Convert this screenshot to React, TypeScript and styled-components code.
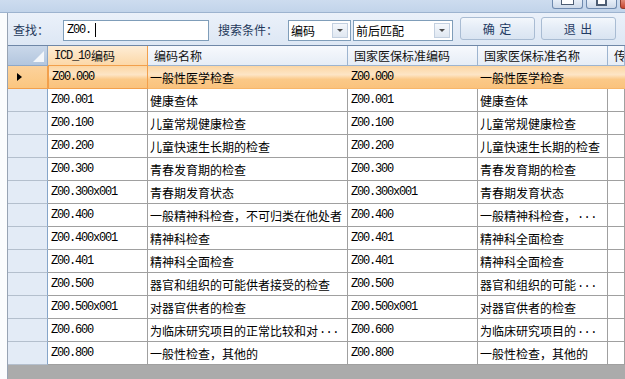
import React from 'react'
import styled, { createGlobalStyle } from 'styled-components'

const cjk = `"Noto Sans CJK SC", "Noto Sans", sans-serif`
const mono = `"Liberation Mono", "Noto Sans CJK SC", monospace`

const GlobalStyle = createGlobalStyle`
  html, body {
    margin: 0;
    padding: 0;
    width: 625px;
    height: 379px;
    overflow: hidden;
    background: #ffffff;
    font-family: ${cjk};
  }
  * { box-sizing: border-box; }
`

const Frame = styled.div`
  display: flex;
  flex-direction: column;
  width: 625px;
  height: 379px;
  overflow: hidden;
`

const TitleBar = styled.div`
  height: 13px;
  flex: none;
  display: flex;
  justify-content: flex-end;
  align-items: flex-start;
  gap: 3px;
  background: linear-gradient(180deg, #cddcef 0%, #c2d4ea 100%);
  border-bottom: 1px solid #9db3cf;
  overflow: hidden;
`

const WinButton = styled.div<{ $close?: boolean }>`
  width: ${({ $close }) => ($close ? '42px' : '31px')};
  margin-right: ${({ $close }) => ($close ? '-37px' : '0')};
  height: 9px;
  display: flex;
  justify-content: center;
  align-items: flex-start;
  border: 1px solid ${({ $close }) => ($close ? '#8e3a2c' : '#6f8aae')};
  border-top: none;
  border-radius: 0 0 3px 3px;
  background: ${({ $close }) =>
    $close
      ? 'linear-gradient(180deg, #e08a78 0%, #c8442f 100%)'
      : 'linear-gradient(180deg, #e8eff8 0%, #cdd9e9 100%)'};
`

const MinGlyph = styled.div`
  width: 13px;
  height: 5px;
  background: #ffffff;
  border: 1px solid #4d5d73;
  border-top: none;
`

const RestoreGlyph = styled.div`
  width: 11px;
  height: 6px;
  background: #ffffff;
  border: 2px solid #4d5d73;
  border-top: none;
`

const Body = styled.div`
  flex: 1;
  display: flex;
  min-height: 0;
`

const LeftStrip = styled.div`
  width: 8px;
  flex: none;
  background: #fbfcfd;
  border-right: 1px solid #97a3b3;
`

const Main = styled.div`
  flex: 1;
  display: flex;
  flex-direction: column;
  min-width: 0;
`

const Toolbar = styled.div`
  height: 33px;
  flex: none;
  display: flex;
  align-items: center;
  padding: 0 0 0 5px;
  background: linear-gradient(180deg, #ebf1fa 0%, #dde7f4 100%);
  border-bottom: 1px solid #6f87a7;
`

const Label = styled.span<{ $ml?: number }>`
  font-family: ${cjk};
  font-size: 12px;
  color: #1e395b;
  margin-left: ${({ $ml }) => $ml ?? 0}px;
  white-space: nowrap;
`

const SearchInput = styled.div`
  width: 146px;
  height: 21px;
  margin-left: 14px;
  margin-top: 2px;
  display: flex;
  align-items: center;
  padding-left: 3px;
  background: #ffffff;
  border: 1px solid #7f9db9;
  font-family: ${mono};
  font-size: 12px;
  letter-spacing: -1.2px;
  color: #000;
`

const Caret = styled.span`
  display: inline-block;
  width: 1px;
  height: 14px;
  margin-left: 4px;
  background: #000;
`

const Select = styled.div<{ $w: number; $ml: number }>`
  width: ${({ $w }) => $w}px;
  height: 21px;
  margin-left: ${({ $ml }) => $ml}px;
  margin-top: 3px;
  display: flex;
  align-items: center;
  justify-content: space-between;
  padding: 0 2px 0 2px;
  background: #ffffff;
  border: 1px solid #7f9db9;
  font-family: ${cjk};
  font-size: 12px;
  color: #000;
`

const DropButton = styled.div`
  width: 16px;
  height: 15px;
  display: flex;
  align-items: center;
  justify-content: center;
  border: 1px solid #c3d0e0;
  background: linear-gradient(180deg, #f5f8fc 0%, #dfe7f1 100%);

  &::after {
    content: '';
    border-left: 3px solid transparent;
    border-right: 3px solid transparent;
    border-top: 3px solid #4a4a4a;
  }
`

const ActionButton = styled.div<{ $ml: number }>`
  width: 75px;
  height: 23px;
  margin-left: ${({ $ml }) => $ml}px;
  margin-top: -1px;
  display: flex;
  align-items: center;
  justify-content: center;
  border: 1px solid #a9bcd3;
  border-radius: 3px;
  background: linear-gradient(180deg, #f3f7fc 0%, #e4ecf6 50%, #d9e4f1 100%);
  font-family: ${cjk};
  font-size: 12px;
  letter-spacing: 1px;
  color: #1f3b63;
`

const Grid = styled.div`
  flex: 1;
  display: flex;
  flex-direction: column;
  min-height: 0;
  background: #ababab;
`

const cols = '40px 100px 200px 130px 130px 1fr'

const HeaderRow = styled.div`
  display: grid;
  grid-template-columns: ${cols};
  height: 20px;
  flex: none;
`

const Corner = styled.div`
  position: relative;
  background: linear-gradient(180deg, #cad8ea 0%, #b3c6de 100%);
  border-right: 1px solid #8ea8c8;
  border-bottom: 1px solid #8ea8c8;

  &::after {
    content: '';
    position: absolute;
    right: 3px;
    bottom: 3px;
    border-left: 11px solid transparent;
    border-bottom: 11px solid #f4f7fb;
  }
`

const HeadCell = styled.div<{ $active?: boolean }>`
  display: flex;
  align-items: center;
  padding-left: 6px;
  white-space: nowrap;
  overflow: hidden;
  font-family: ${cjk};
  font-size: 12px;
  color: #111;
  background: ${({ $active }) =>
    $active
      ? 'linear-gradient(180deg, #feedd6 0%, #fcd8a8 100%)'
      : 'linear-gradient(180deg, #f7f9fd 0%, #e6edf6 100%)'};
  border-right: 1px solid ${({ $active }) => ($active ? '#f2a04c' : '#9db4cf')};
  border-bottom: 1px solid ${({ $active }) => ($active ? '#f2a04c' : '#9db4cf')};
`

const Row = styled.div<{ $selected?: boolean }>`
  display: grid;
  grid-template-columns: ${cols};
  height: 23px;
  flex: none;
  background: ${({ $selected }) =>
    $selected
      ? 'linear-gradient(180deg, #fcd6a3 0%, #fde5c6 38%, #fbc988 58%, #fac27c 100%)'
      : '#ffffff'};
`

const RowHead = styled.div<{ $selected?: boolean }>`
  display: flex;
  align-items: center;
  padding-left: 9px;
  background: ${({ $selected }) =>
    $selected ? 'linear-gradient(180deg, #fcd29c 0%, #fbc67f 100%)' : '#e3ebf6'};
  border-right: 1px solid ${({ $selected }) => ($selected ? '#f2a04c' : '#86a5c9')};
  border-bottom: 1px solid ${({ $selected }) => ($selected ? '#f2a04c' : '#b4bfcd')};
`

const Pointer = styled.span`
  width: 0;
  height: 0;
  border-top: 4px solid transparent;
  border-bottom: 4px solid transparent;
  border-left: 5px solid #000;
`

const Cell = styled.div<{ $code?: boolean; $selected?: boolean; $current?: boolean }>`
  display: flex;
  align-items: center;
  padding-left: ${({ $code }) => ($code ? 3 : 2)}px;
  white-space: nowrap;
  overflow: hidden;
  color: #000;
  font-family: ${({ $code }) => ($code ? mono : cjk)};
  font-size: 12px;
  letter-spacing: ${({ $code }) => ($code ? '-1.2px' : '0')};
  border-right: 1px solid
    ${({ $selected, $current }) => ($current ? '#f2a04c' : $selected ? 'transparent' : '#a0a0a0')};
  border-bottom: 1px solid
    ${({ $selected, $current }) => ($current ? '#f2a04c' : $selected ? '#f7b66a' : '#a0a0a0')};
  border-left: ${({ $current }) => ($current ? '1px solid #f2a04c' : 'none')};
`

const Code = styled.span`
  font-family: ${mono};
  font-size: 12px;
  letter-spacing: -1.2px;
  margin-right: 1px;
`

const Dots = styled.span`
  font-family: ${mono};
  font-size: 12px;
  letter-spacing: -0.6px;
  margin-left: 1px;
`

const Filler = styled.div`
  flex: 1;
  background: #ababab;
`

const rows: [string, string, string, string][] = [
  ['Z00.000', '一般性医学检查', 'Z00.000', '一般性医学检查'],
  ['Z00.001', '健康查体', 'Z00.001', '健康查体'],
  ['Z00.100', '儿童常规健康检查', 'Z00.100', '儿童常规健康检查'],
  ['Z00.200', '儿童快速生长期的检查', 'Z00.200', '儿童快速生长期的检查'],
  ['Z00.300', '青春发育期的检查', 'Z00.300', '青春发育期的检查'],
  ['Z00.300x001', '青春期发育状态', 'Z00.300x001', '青春期发育状态'],
  ['Z00.400', '一般精神科检查，不可归类在他处者', 'Z00.400', '一般精神科检查，...'],
  ['Z00.400x001', '精神科检查', 'Z00.401', '精神科全面检查'],
  ['Z00.401', '精神科全面检查', 'Z00.401', '精神科全面检查'],
  ['Z00.500', '器官和组织的可能供者接受的检查', 'Z00.500', '器官和组织的可能...'],
  ['Z00.500x001', '对器官供者的检查', 'Z00.500x001', '对器官供者的检查'],
  ['Z00.600', '为临床研究项目的正常比较和对...', 'Z00.600', '为临床研究项目的...'],
  ['Z00.800', '一般性检查，其他的', 'Z00.800', '一般性检查，其他的'],
]

const nameText = (text: string) =>
  text.endsWith('...') ? (
    <>
      {text.slice(0, -3)}
      <Dots>...</Dots>
    </>
  ) : (
    text
  )

export default function App() {
  return (
    <Frame>
      <GlobalStyle />
      <TitleBar>
        <WinButton>
          <MinGlyph />
        </WinButton>
        <WinButton>
          <RestoreGlyph />
        </WinButton>
        <WinButton $close />
      </TitleBar>
      <Body>
        <LeftStrip />
        <Main>
          <Toolbar>
            <Label>查找：</Label>
            <SearchInput>
              Z00.
              <Caret />
            </SearchInput>
            <Label $ml={9}>搜索条件：</Label>
            <Select $w={63} $ml={10}>
              编码
              <DropButton />
            </Select>
            <Select $w={100} $ml={2}>
              前后匹配
              <DropButton />
            </Select>
            <ActionButton $ml={7}>确 定</ActionButton>
            <ActionButton $ml={6}>退 出</ActionButton>
          </Toolbar>
          <Grid>
            <HeaderRow>
              <Corner />
              <HeadCell $active>
                <Code>ICD_10</Code>编码
              </HeadCell>
              <HeadCell>编码名称</HeadCell>
              <HeadCell>国家医保标准编码</HeadCell>
              <HeadCell>国家医保标准名称</HeadCell>
              <HeadCell>传</HeadCell>
            </HeaderRow>
            {rows.map(([code, name, natCode, natName], i) => {
              const selected = i === 0
              return (
                <Row key={i} $selected={selected}>
                  <RowHead $selected={selected}>{selected && <Pointer />}</RowHead>
                  <Cell $code $selected={selected} $current={selected}>
                    {code}
                  </Cell>
                  <Cell $selected={selected}>{nameText(name)}</Cell>
                  <Cell $code $selected={selected}>
                    {natCode}
                  </Cell>
                  <Cell $selected={selected}>{nameText(natName)}</Cell>
                  <Cell $selected={selected} />
                </Row>
              )
            })}
            <Filler />
          </Grid>
        </Main>
      </Body>
    </Frame>
  )
}
